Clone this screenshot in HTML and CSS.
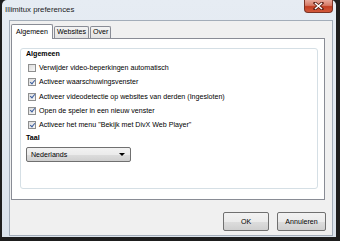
FILE: index.html
```html
<!DOCTYPE html>
<html>
<head>
  <title>Illimitux preferences</title>
  <link rel="stylesheet" href="styles.css">
</head>
<body>
  <div class="window">
    <div class="titlebar">
      <span class="title">Illimitux preferences</span>
      <button class="close-btn" aria-label="Sluiten">
        <svg width="11" height="8" viewBox="0 0 11 8">
          <path d="M2 1 L9 7 M9 1 L2 7" stroke="#5a1c12" stroke-width="3" stroke-linecap="square"/>
          <path d="M2 1 L9 7 M9 1 L2 7" stroke="#ffffff" stroke-width="1.6"/>
        </svg>
      </button>
    </div>
    <div class="client">
      <div class="tabs">
        <div class="tab active">Algemeen</div>
        <div class="tab">Websites</div>
        <div class="tab">Over</div>
      </div>
      <div class="tab-panel">
        <div class="group">
          <div class="group-title">Algemeen</div>
          <label class="check-row"><span class="checkbox"></span>Verwijder video-beperkingen automatisch</label>
          <label class="check-row"><span class="checkbox checked"></span>Activeer waarschuwingsvenster</label>
          <label class="check-row"><span class="checkbox checked"></span>Activeer videodetectie op websites van derden (Ingesloten)</label>
          <label class="check-row"><span class="checkbox checked"></span>Open de speler in een nieuw venster</label>
          <label class="check-row"><span class="checkbox checked"></span>Activeer het menu "Bekijk met DivX Web Player"</label>
          <div class="group-title taal">Taal</div>
          <div class="select">
            <span>Nederlands</span>
            <span class="arrow"></span>
          </div>
        </div>
      </div>
      <div class="buttons">
        <button class="btn ok">OK</button>
        <button class="btn">Annuleren</button>
      </div>
    </div>
  </div>
</body>
</html>
```

FILE: styles.css
```css
:root {
  --frame: #dfe6ee;
  --frame-edge: #1e1e1e;
  --client: #f0f0f0;
  --tab-border: #898c95;
  --group-border: #d5dfe5;
  --text: #000000;
}

* {
  box-sizing: border-box;
}

body {
  margin: 0;
  width: 340px;
  height: 241px;
  background: var(--frame-edge);
  font-family: 'Liberation Sans', Arial, sans-serif;
  font-size: 7.1px;
  color: var(--text);
  overflow: hidden;
}

.window {
  width: 334px;
  height: 237px;
  margin: 0 4px 4px 2px;
  padding: 0 3px 1px 7px;
  background: linear-gradient(to bottom, #e6ecf3, #dbe3ec);
  border-radius: 5px 5px 0 0;
  display: flex;
  flex-direction: column;
}

.titlebar {
  height: 20px;
  display: flex;
  align-items: flex-start;
  justify-content: space-between;
  margin-left: -4px;
}

.title {
  font-size: 7.8px;
  line-height: 20px;
  color: #1b1b1b;
}

.close-btn {
  width: 29px;
  height: 13px;
  margin: 0;
  padding: 0;
  border: 1px solid #7a3325;
  border-top: none;
  border-radius: 0 0 4px 4px;
  background: linear-gradient(to bottom, #e9a99b 0%, #d67a66 45%, #c23d22 55%, #d35a3c 100%);
  display: flex;
  align-items: center;
  justify-content: center;
}

.client {
  height: 216px;
  background: var(--client);
  border: 1px solid #a3adb9;
  padding: 3px 0 0 1px;
  display: flex;
  flex-direction: column;
}

.tabs {
  display: flex;
  align-items: flex-end;
  height: 14px;
  position: relative;
  z-index: 1;
}

.tab {
  height: 12px;
  padding: 0 2px;
  margin-right: 1px;
  border: 1px solid var(--tab-border);
  border-bottom: none;
  border-radius: 2px 2px 0 0;
  background: linear-gradient(to bottom, #f3f3f3, #e3e3e3);
  line-height: 11px;
}

.tab.active {
  height: 15px;
  margin-bottom: -1px;
  padding: 0 4px;
  background: #ffffff;
  line-height: 14px;
}

.tab-panel {
  height: 162px;
  margin-right: 7px;
  background: #ffffff;
  border: 1px solid var(--tab-border);
  padding: 9px 6px 10px 8px;
}

.group {
  height: 100%;
  border: 1px solid var(--group-border);
  border-radius: 3px;
  padding: 0 5px;
}

.group-title {
  font-weight: bold;
  line-height: 11px;
  margin-bottom: 1px;
}

.group-title.taal {
  line-height: 12px;
  margin: 0;
}

.check-row {
  display: flex;
  align-items: center;
  height: 14.25px;
  padding-left: 2px;
  white-space: nowrap;
}

.checkbox {
  width: 8px;
  height: 8px;
  margin-right: 3px;
  border: 1px solid #8e8f8f;
  background: linear-gradient(to bottom right, #dcdcdc, #f8f8f8);
  position: relative;
}

.checkbox.checked::after {
  content: '';
  position: absolute;
  left: 1.5px;
  top: -0.5px;
  width: 2px;
  height: 4px;
  border: solid #3c5fa0;
  border-width: 0 1.3px 1.3px 0;
  transform: rotate(40deg);
}

.select {
  width: 105px;
  height: 15px;
  margin-top: 3px;
  border: 1px solid #707070;
  border-radius: 2px;
  background: linear-gradient(to bottom, #f2f2f2 0%, #ebebeb 50%, #dddddd 51%, #cfcfcf 100%);
  display: flex;
  align-items: center;
  justify-content: space-between;
  padding: 0 5px 0 4px;
}

.arrow {
  width: 0;
  height: 0;
  border-left: 3px solid transparent;
  border-right: 3px solid transparent;
  border-top: 3px solid #000000;
}

.buttons {
  display: flex;
  justify-content: flex-end;
  gap: 8px;
  margin-top: 12px;
  padding-right: 6px;
}

.btn {
  height: 19px;
  width: 49px;
  margin: 0;
  padding: 0;
  border: 1px solid #707070;
  border-radius: 2px;
  background: linear-gradient(to bottom, #f2f2f2 0%, #ebebeb 50%, #dddddd 51%, #cfcfcf 100%);
  font-family: 'Liberation Sans', Arial, sans-serif;
  font-size: 7.1px;
  color: var(--text);
}

.btn.ok {
  width: 46px;
}
```
